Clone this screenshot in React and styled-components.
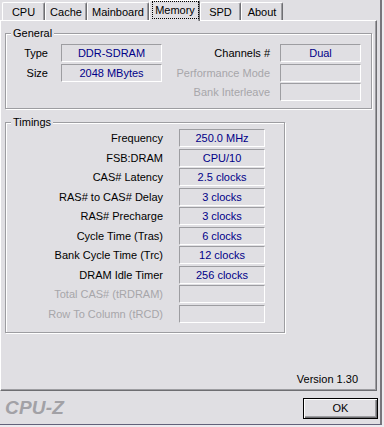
import React from 'react';
import styled, { createGlobalStyle } from 'styled-components';

const GlobalStyle = createGlobalStyle`
  html, body {
    margin: 0;
    padding: 0;
    background: #ecebef;
  }
  body {
    font-family: "Liberation Sans", Arial, sans-serif;
    font-size: 11px;
  }
`;

const Window = styled.div`
  box-sizing: content-box;
  width: 380px;
  height: 424px;
  background: #e0dfe3;
  border-right: 2px solid #77767c;
  border-bottom: 1px solid #62627a;
  display: flex;
  flex-direction: column;
`;

const TabBar = styled.div`
  display: flex;
  align-items: flex-end;
  height: 20px;
  padding-left: 2px;
  position: relative;
  z-index: 1;
`;

const Tab = styled.div`
  box-sizing: border-box;
  width: ${(p) => p.$w}px;
  height: ${(p) => (p.$active ? 21 : 18)}px;
  margin-bottom: ${(p) => (p.$active ? -1 : 0)}px;
  display: flex;
  align-items: ${(p) => (p.$active ? 'flex-start' : 'center')};
  justify-content: center;
  background: #e0dfe3;
  border-top: 1px solid #fff;
  border-left: 1px solid #fff;
  border-right: 1px solid #6e6e72;
  box-shadow: inset -1px 0 #9d9da1;
  border-radius: 2px 2px 0 0;
  color: #000;
  white-space: nowrap;
`;

const Focus = styled.span`
  box-sizing: border-box;
  width: 47px;
  height: 18px;
  margin-left: 1px;
  border: 1px dotted #000;
  display: flex;
  align-items: center;
  justify-content: center;
`;

const Panel = styled.div`
  box-sizing: border-box;
  width: 377px;
  height: 371px;
  border-top: 1px solid #fff;
  border-left: 1px solid #fff;
  border-right: 1px solid #6e6e72;
  border-bottom: 1px solid #6e6e72;
  box-shadow: inset -1px -1px #9d9da1;
  padding: 12px 0 0 4px;
  display: flex;
  flex-direction: column;
`;

const Group = styled.div`
  box-sizing: border-box;
  width: ${(p) => p.$w}px;
  margin-top: ${(p) => p.$mt || 0}px;
  border: 1px solid #9d9da1;
  box-shadow: inset 1px 1px #fff, 1px 1px #fff;
  padding-bottom: ${(p) => p.$pb}px;
`;

const Caption = styled.div`
  display: table;
  margin: -7px 0 0 5px;
  padding: 0 2px;
  line-height: 13px;
  background: #e0dfe3;
  color: #000;
`;

const Grid = styled.div`
  display: grid;
  grid-template-columns: ${(p) => p.$cols};
  grid-auto-rows: 18px;
  row-gap: 1.5px;
  margin-top: ${(p) => p.$mt}px;
`;

const Label = styled.div`
  display: flex;
  align-items: center;
  justify-content: flex-end;
  padding-right: ${(p) => p.$pr}px;
  color: ${(p) => (p.$disabled ? '#a7a6aa' : '#000')};
  white-space: nowrap;
`;

const Field = styled.div`
  box-sizing: border-box;
  border-top: 1px solid #9d9da1;
  border-left: 1px solid #9d9da1;
  border-right: 1px solid #fff;
  border-bottom: 1px solid #fff;
  color: #000088;
  display: flex;
  align-items: center;
  justify-content: center;
  white-space: nowrap;
`;

const Version = styled.div`
  margin-top: auto;
  align-self: flex-end;
  padding: 0 18px 4px 0;
  line-height: 13px;
  color: #000;
`;

const BottomBar = styled.div`
  flex: 1;
  display: flex;
  align-items: center;
  justify-content: space-between;
  padding: 1px 2px 0 5px;
`;

const Logo = styled.div`
  font-family: "Liberation Sans", Arial, sans-serif;
  font-weight: bold;
  font-style: italic;
  font-size: 19px;
  color: #a2a1a6;
  letter-spacing: 0.2px;
`;

const Button = styled.div`
  box-sizing: border-box;
  width: 75px;
  height: 21px;
  border: 1px solid #000;
  box-shadow: inset 1px 1px #fff, inset -1px -1px #6e6e72, inset -2px -2px #9d9da1;
  display: flex;
  align-items: center;
  justify-content: center;
  color: #000;
`;

const tabs = [
  { name: 'CPU', w: 43 },
  { name: 'Cache', w: 42 },
  { name: 'Mainboard', w: 62 },
  { name: 'Memory', w: 51, active: true },
  { name: 'SPD', w: 41 },
  { name: 'About', w: 42 },
];

const timings = [
  ['Frequency', '250.0 MHz'],
  ['FSB:DRAM', 'CPU/10'],
  ['CAS# Latency', '2.5 clocks'],
  ['RAS# to CAS# Delay', '3 clocks'],
  ['RAS# Precharge', '3 clocks'],
  ['Cycle Time (Tras)', '6 clocks'],
  ['Bank Cycle Time (Trc)', '12 clocks'],
  ['DRAM Idle Timer', '256 clocks'],
  ['Total CAS# (tRDRAM)', null],
  ['Row To Column (tRCD)', null],
];

export default function App() {
  return (
    <>
      <GlobalStyle />
      <Window>
        <TabBar>
          {tabs.map((t) => (
            <Tab key={t.name} $w={t.w} $active={t.active}>
              {t.active ? <Focus>{t.name}</Focus> : t.name}
            </Tab>
          ))}
        </TabBar>
        <Panel>
          <Group $w={367} $pb={7}>
            <Caption>General</Caption>
            <Grid $cols="55px 101px 118px 81px" $mt={4}>
              <Label $pr={13}>Type</Label>
              <Field>DDR-SDRAM</Field>
              <Label $pr={10}>Channels #</Label>
              <Field>Dual</Field>
              <Label $pr={13}>Size</Label>
              <Field>2048 MBytes</Field>
              <Label $pr={10} $disabled>Performance Mode</Label>
              <Field />
              <div />
              <div />
              <Label $pr={10} $disabled>Bank Interleave</Label>
              <Field />
            </Grid>
          </Group>
          <Group $w={280} $mt={13} $pb={9}>
            <Caption>Timings</Caption>
            <Grid $cols="173px 86px" $mt={0}>
              {timings.map(([label, value]) => (
                <React.Fragment key={label}>
                  <Label $pr={16} $disabled={value === null}>{label}</Label>
                  <Field>{value}</Field>
                </React.Fragment>
              ))}
            </Grid>
          </Group>
          <Version>Version 1.30</Version>
        </Panel>
        <BottomBar>
          <Logo>CPU-Z</Logo>
          <Button>OK</Button>
        </BottomBar>
      </Window>
    </>
  );
}
